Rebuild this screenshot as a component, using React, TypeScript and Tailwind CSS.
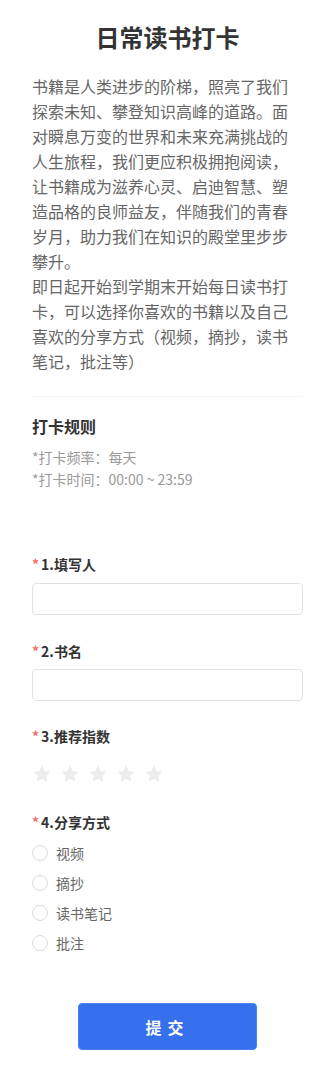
import { useState } from "react";

const intro = [
  "书籍是人类进步的阶梯，照亮了我们探索未知、攀登知识高峰的道路。面对瞬息万变的世界和未来充满挑战的人生旅程，我们更应积极拥抱阅读，让书籍成为滋养心灵、启迪智慧、塑造品格的良师益友，伴随我们的青春岁月，助力我们在知识的殿堂里步步攀升。",
  "即日起开始到学期末开始每日读书打卡，可以选择你喜欢的书籍以及自己喜欢的分享方式（视频，摘抄，读书笔记，批注等）",
];

const opcoes = ["视频", "摘抄", "读书笔记", "批注"];

function Estrela({ ativa }: { ativa: boolean }) {
  return (
    <svg width="20" height="20" viewBox="0 0 24 24">
      <path
        d="M12 1.8l3.1 6.6 7.2.9-5.3 5 1.4 7.1L12 17.9l-6.4 3.5 1.4-7.1-5.3-5 7.2-.9z"
        fill={ativa ? "#f7ba2a" : "#ececec"}
      />
    </svg>
  );
}

function Rotulo({ texto }: { texto: string }) {
  return (
    <p className="flex items-center text-[14px] leading-[20px] font-bold text-[#333]">
      <span className="mr-[2px] text-[#f56c6c]">*</span>
      {texto}
    </p>
  );
}

export default function App() {
  const [nota, setNota] = useState(0);
  const [forma, setForma] = useState("");
  const [nome, setNome] = useState("");
  const [livro, setLivro] = useState("");

  return (
    <div className="min-h-screen bg-white px-8 pb-4 font-['Noto_Sans_CJK_SC',sans-serif]">
      <h1 className="pt-[20px] text-center text-[24px] leading-[34px] font-bold text-[#333]">
        日常读书打卡
      </h1>

      <div className="mt-[20px] text-[16px] leading-[25px] text-[#666]">
        {intro.map((t) => (
          <p key={t}>{t}</p>
        ))}
      </div>

      <div className="mt-[22px] border-t border-[#f2f2f2]" />

      <h2 className="mt-[17px] text-[16px] leading-[24px] font-bold text-[#333]">打卡规则</h2>
      <div className="mt-[8px] text-[14px] leading-[22px] text-[#999]">
        <p>*打卡频率：每天</p>
        <p>*打卡时间：00:00 ~ 23:59</p>
      </div>

      <form className="mt-[64px]" onSubmit={(e) => e.preventDefault()}>
        <Rotulo texto="1.填写人" />
        <input
          value={nome}
          onChange={(e) => setNome(e.target.value)}
          className="mt-[9px] h-[32px] w-full rounded-[4px] border border-[#e3e3e3] px-3 text-[14px] outline-none"
        />

        <div className="mt-[26px]">
          <Rotulo texto="2.书名" />
        </div>
        <input
          value={livro}
          onChange={(e) => setLivro(e.target.value)}
          className="mt-[8px] h-[32px] w-full rounded-[4px] border border-[#e3e3e3] px-3 text-[14px] outline-none"
        />

        <div className="mt-[25px]">
          <Rotulo texto="3.推荐指数" />
        </div>
        <div className="mt-[18px] flex gap-[8px]">
          {[1, 2, 3, 4, 5].map((n) => (
            <button type="button" key={n} onClick={() => setNota(n)}>
              <Estrela ativa={n <= nota} />
            </button>
          ))}
        </div>

        <div className="mt-[28px]">
          <Rotulo texto="4.分享方式" />
        </div>
        <div className="mt-[6px]">
          {opcoes.map((o) => (
            <label key={o} className="flex h-[30px] items-center text-[14px] text-[#666]">
              <input
                type="radio"
                name="forma"
                checked={forma === o}
                onChange={() => setForma(o)}
                className="sr-only"
              />
              <span
                className={`h-[16px] w-[16px] rounded-full border ${forma === o ? "border-[5px] border-[#3670ec]" : "border-[#dcdcdc]"}`}
              />
              <span className="ml-[8px]">{o}</span>
            </label>
          ))}
        </div>

        <div className="mt-[45px] flex justify-center">
          <button className="h-[47px] w-[179px] rounded-[4px] border border-[#4a82f5] bg-[#3670ec] text-[16px] font-bold tracking-[6px] text-white">
            提交
          </button>
        </div>
      </form>
    </div>
  );
}
